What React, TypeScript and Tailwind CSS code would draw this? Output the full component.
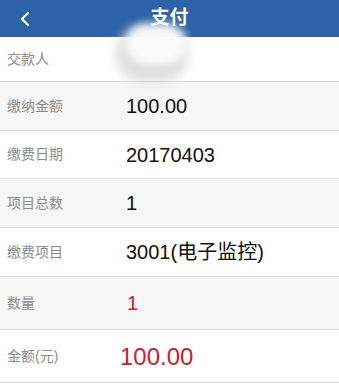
import { ChevronLeft } from 'lucide-react';

type Row = { label: string; value: string; tone?: 'red' | 'redBig'; h: string; shade: boolean };

const ROWS: Row[] = [
  { label: '交款人', value: '', h: 'h-[45px]', shade: false },
  { label: '缴纳金额', value: '100.00', h: 'h-[49px]', shade: true },
  { label: '缴费日期', value: '20170403', h: 'h-[48px]', shade: false },
  { label: '项目总数', value: '1', h: 'h-[49px]', shade: true },
  { label: '缴费项目', value: '3001(电子监控)', h: 'h-[49px]', shade: false },
  { label: '数量', value: '1', tone: 'red', h: 'h-[53px]', shade: true },
  { label: '金额(元)', value: '100.00', tone: 'redBig', h: 'h-[53px]', shade: false },
];

export default function App() {
  return (
    <div className="relative h-[388px] w-[339px] overflow-hidden bg-white font-['Liberation_Sans','Noto_Sans_CJK_SC',sans-serif]">
      <header className="grid h-[37px] grid-cols-[1fr_auto_1fr] items-center bg-[#2b62a8]">
        <div className="pl-[13px]">
          <ChevronLeft className="h-[24px] w-[24px] text-white" strokeWidth={2.3} />
        </div>
        <span className="text-[19px] font-bold text-white">支付</span>
        <div />
      </header>

      <div>
        {ROWS.map((row) => (
          <div
            key={row.label}
            className={`flex items-center border-b border-[#dadada] ${row.h} ${row.shade ? 'bg-[#f7f7f7]' : 'bg-white'}`}
          >
            <span className="w-[120px] pl-[7px] text-[14px] text-[#8c8c8c]">{row.label}</span>
            <span
              className={
                row.tone === 'redBig'
                  ? 'pt-[2px] text-[24px] text-[#c3232b]'
                  : row.tone === 'red'
                    ? 'pl-[7px] text-[20px] text-[#c3232b]'
                    : 'pl-[6px] text-[20px] text-[#111]'
              }
            >
              {row.value}
            </span>
          </div>
        ))}
      </div>

      {/* blurred-out payer name */}
      <div className="absolute left-[116px] top-[26px] h-[56px] w-[72px] rounded-full bg-[#d4d4d4] opacity-80 blur-[6px]" />
      <div className="absolute left-[126px] top-[24px] h-[40px] w-[60px] rounded-full bg-white opacity-90 blur-[4px]" />
    </div>
  );
}
